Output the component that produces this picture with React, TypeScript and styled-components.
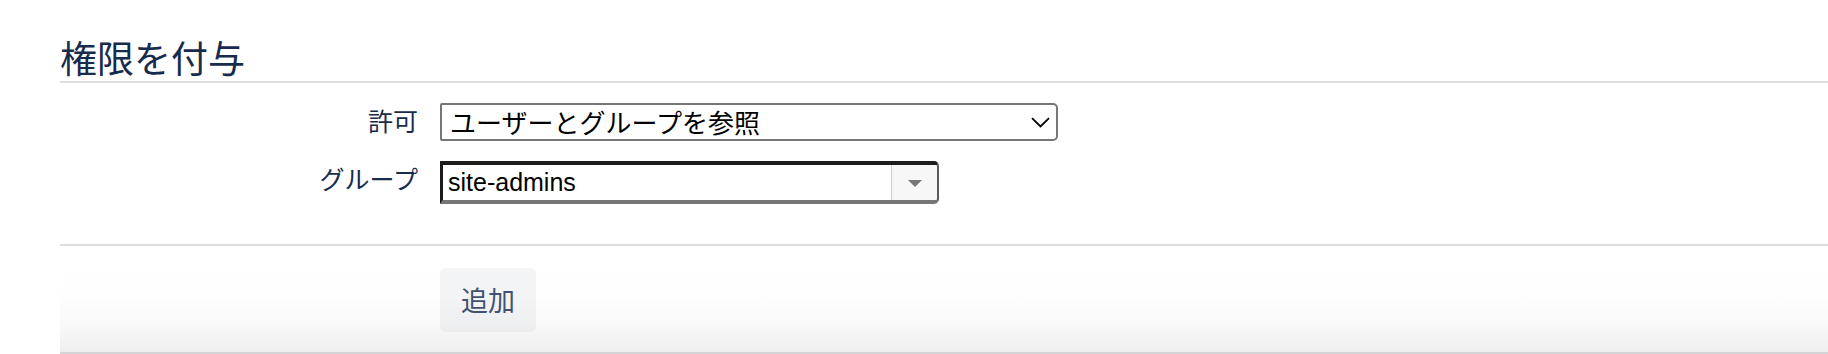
import React from 'react'
import styled, { createGlobalStyle } from 'styled-components'

const GlobalStyle = createGlobalStyle`
  html, body {
    margin: 0;
    padding: 0;
    background: #ffffff;
  }
  body {
    font-family: "Noto Sans CJK JP", "Noto Sans", sans-serif;
    color: #172b4d;
  }
`

const S = {
  Page: styled.div`
    padding-left: 60px;
  `,
  Title: styled.h2`
    margin: 0;
    padding-top: 33px;
    font-size: 37px;
    line-height: 48px;
    font-weight: 400;
    color: #172b4d;
    border-bottom: 2px solid #dddddd;
  `,
  Fields: styled.div`
    display: flex;
    flex-direction: column;
    gap: 20px;
    padding: 20px 0 40px;
    border-bottom: 2px solid #dcdcdc;
  `,
  Row: styled.div`
    display: grid;
    grid-template-columns: 358px auto;
    column-gap: 22px;
    align-items: start;
    justify-content: start;
  `,
  Label: styled.label`
    text-align: right;
    font-size: 25px;
    line-height: 34px;
    color: #172b4d;
  `,
  Select: styled.div`
    box-sizing: border-box;
    width: 618px;
    height: 38px;
    display: flex;
    align-items: center;
    justify-content: space-between;
    padding: 0 6px 0 8px;
    border: 2px solid #767676;
    border-radius: 2px 5px 5px 2px;
    background: #ffffff;
    color: #000000;
    font-size: 26px;
    line-height: 34px;
  `,
  Chevron: styled.svg`
    width: 19px;
    height: 11px;
    flex: none;
  `,
  Combo: styled.div`
    box-sizing: border-box;
    width: 499px;
    height: 43px;
    display: flex;
    border-style: solid;
    border-width: 4px 2px 4px 3px;
    border-color: #1c1c1c #5a5a5a #767676 #1c1c1c;
    border-radius: 0 5px 5px 0;
    background: #ffffff;
    overflow: hidden;
  `,
  ComboInput: styled.div`
    flex: 1;
    padding-left: 5px;
    font-family: "Liberation Sans", Arial, sans-serif;
    font-size: 25px;
    line-height: 35px;
    color: #000000;
  `,
  ComboButton: styled.div`
    width: 45px;
    flex: none;
    display: flex;
    align-items: center;
    justify-content: center;
    background: #f7f7f7;
    border-left: 1px solid #cfcfcf;
  `,
  Triangle: styled.span`
    width: 0;
    height: 0;
    border-left: 7px solid transparent;
    border-right: 7px solid transparent;
    border-top: 7px solid #777777;
    margin-top: 1px;
  `,
  Footer: styled.div`
    padding: 22px 0 20px 380px;
    background: linear-gradient(to bottom, #ffffff 0%, #fefefe 45%, #f9f9f9 75%, #eeeeee 100%);
    border-bottom: 2px solid #d4d4d7;
  `,
  Button: styled.button`
    height: 64px;
    padding: 0 21px;
    border: none;
    border-radius: 5px;
    background: rgba(9, 30, 66, 0.045);
    color: #42526e;
    font-family: "Noto Sans CJK JP", "Noto Sans", sans-serif;
    font-size: 27px;
    line-height: 64px;
    cursor: pointer;
  `
}

export default function App() {
  return (
    <>
      <GlobalStyle />
      <S.Page>
        <S.Title>権限を付与</S.Title>
        <S.Fields>
          <S.Row>
            <S.Label>許可</S.Label>
            <S.Select>
              <span>ユーザーとグループを参照</span>
              <S.Chevron viewBox="0 0 19 11" fill="none">
                <path d="M1 1.2 L9.5 9.5 L18 1.2" stroke="#000" strokeWidth="1.8" />
              </S.Chevron>
            </S.Select>
          </S.Row>
          <S.Row>
            <S.Label>グループ</S.Label>
            <S.Combo>
              <S.ComboInput>site-admins</S.ComboInput>
              <S.ComboButton>
                <S.Triangle />
              </S.ComboButton>
            </S.Combo>
          </S.Row>
        </S.Fields>
        <S.Footer>
          <S.Button>追加</S.Button>
        </S.Footer>
      </S.Page>
    </>
  )
}
